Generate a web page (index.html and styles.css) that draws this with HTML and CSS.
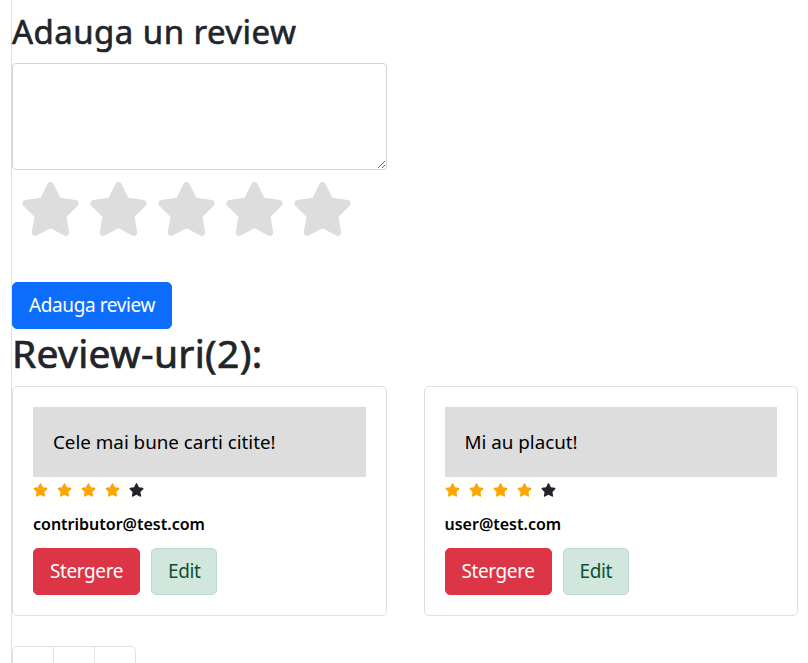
FILE: index.html
```html
<!DOCTYPE html>
<html lang="ro">
<head>
<meta charset="utf-8">
<title>Review-uri</title>
<link rel="stylesheet" href="styles.css">
</head>
<body>
<div class="page">
  <h2 class="title">Adauga un review</h2>
  <textarea class="review-input"></textarea>
  <div class="rating">
    <svg class="big-star" viewBox="0 0 576 512"><path d="M259.3 17.8L194 150.2 47.9 171.5c-26.2 3.8-36.7 36.1-17.7 54.6l105.7 103-25 145.5c-4.5 26.3 23.2 46 46.4 33.7L288 439.6l130.7 68.7c23.2 12.2 50.9-7.4 46.4-33.7l-25-145.5 105.7-103c19-18.5 8.5-50.8-17.7-54.6L382 150.2 316.7 17.8c-11.7-23.6-45.6-23.9-57.4 0z"/></svg>
    <svg class="big-star" viewBox="0 0 576 512"><path d="M259.3 17.8L194 150.2 47.9 171.5c-26.2 3.8-36.7 36.1-17.7 54.6l105.7 103-25 145.5c-4.5 26.3 23.2 46 46.4 33.7L288 439.6l130.7 68.7c23.2 12.2 50.9-7.4 46.4-33.7l-25-145.5 105.7-103c19-18.5 8.5-50.8-17.7-54.6L382 150.2 316.7 17.8c-11.7-23.6-45.6-23.9-57.4 0z"/></svg>
    <svg class="big-star" viewBox="0 0 576 512"><path d="M259.3 17.8L194 150.2 47.9 171.5c-26.2 3.8-36.7 36.1-17.7 54.6l105.7 103-25 145.5c-4.5 26.3 23.2 46 46.4 33.7L288 439.6l130.7 68.7c23.2 12.2 50.9-7.4 46.4-33.7l-25-145.5 105.7-103c19-18.5 8.5-50.8-17.7-54.6L382 150.2 316.7 17.8c-11.7-23.6-45.6-23.9-57.4 0z"/></svg>
    <svg class="big-star" viewBox="0 0 576 512"><path d="M259.3 17.8L194 150.2 47.9 171.5c-26.2 3.8-36.7 36.1-17.7 54.6l105.7 103-25 145.5c-4.5 26.3 23.2 46 46.4 33.7L288 439.6l130.7 68.7c23.2 12.2 50.9-7.4 46.4-33.7l-25-145.5 105.7-103c19-18.5 8.5-50.8-17.7-54.6L382 150.2 316.7 17.8c-11.7-23.6-45.6-23.9-57.4 0z"/></svg>
    <svg class="big-star" viewBox="0 0 576 512"><path d="M259.3 17.8L194 150.2 47.9 171.5c-26.2 3.8-36.7 36.1-17.7 54.6l105.7 103-25 145.5c-4.5 26.3 23.2 46 46.4 33.7L288 439.6l130.7 68.7c23.2 12.2 50.9-7.4 46.4-33.7l-25-145.5 105.7-103c19-18.5 8.5-50.8-17.7-54.6L382 150.2 316.7 17.8c-11.7-23.6-45.6-23.9-57.4 0z"/></svg>
  </div>
  <button class="btn btn-primary">Adauga review</button>
  <h1 class="reviews-title">Review-uri(2):</h1>
  <div class="cards">
    <div class="card">
      <div class="card-text">Cele mai bune carti citite!</div>
      <div class="stars">
        <svg class="star on" viewBox="0 0 576 512"><path d="M259.3 17.8L194 150.2 47.9 171.5c-26.2 3.8-36.7 36.1-17.7 54.6l105.7 103-25 145.5c-4.5 26.3 23.2 46 46.4 33.7L288 439.6l130.7 68.7c23.2 12.2 50.9-7.4 46.4-33.7l-25-145.5 105.7-103c19-18.5 8.5-50.8-17.7-54.6L382 150.2 316.7 17.8c-11.7-23.6-45.6-23.9-57.4 0z"/></svg>
        <svg class="star on" viewBox="0 0 576 512"><path d="M259.3 17.8L194 150.2 47.9 171.5c-26.2 3.8-36.7 36.1-17.7 54.6l105.7 103-25 145.5c-4.5 26.3 23.2 46 46.4 33.7L288 439.6l130.7 68.7c23.2 12.2 50.9-7.4 46.4-33.7l-25-145.5 105.7-103c19-18.5 8.5-50.8-17.7-54.6L382 150.2 316.7 17.8c-11.7-23.6-45.6-23.9-57.4 0z"/></svg>
        <svg class="star on" viewBox="0 0 576 512"><path d="M259.3 17.8L194 150.2 47.9 171.5c-26.2 3.8-36.7 36.1-17.7 54.6l105.7 103-25 145.5c-4.5 26.3 23.2 46 46.4 33.7L288 439.6l130.7 68.7c23.2 12.2 50.9-7.4 46.4-33.7l-25-145.5 105.7-103c19-18.5 8.5-50.8-17.7-54.6L382 150.2 316.7 17.8c-11.7-23.6-45.6-23.9-57.4 0z"/></svg>
        <svg class="star on" viewBox="0 0 576 512"><path d="M259.3 17.8L194 150.2 47.9 171.5c-26.2 3.8-36.7 36.1-17.7 54.6l105.7 103-25 145.5c-4.5 26.3 23.2 46 46.4 33.7L288 439.6l130.7 68.7c23.2 12.2 50.9-7.4 46.4-33.7l-25-145.5 105.7-103c19-18.5 8.5-50.8-17.7-54.6L382 150.2 316.7 17.8c-11.7-23.6-45.6-23.9-57.4 0z"/></svg>
        <svg class="star" viewBox="0 0 576 512"><path d="M259.3 17.8L194 150.2 47.9 171.5c-26.2 3.8-36.7 36.1-17.7 54.6l105.7 103-25 145.5c-4.5 26.3 23.2 46 46.4 33.7L288 439.6l130.7 68.7c23.2 12.2 50.9-7.4 46.4-33.7l-25-145.5 105.7-103c19-18.5 8.5-50.8-17.7-54.6L382 150.2 316.7 17.8c-11.7-23.6-45.6-23.9-57.4 0z"/></svg>
      </div>
      <div class="author">contributor@test.com</div>
      <div class="actions">
        <button class="btn btn-danger">Stergere</button>
        <button class="btn btn-edit">Edit</button>
      </div>
    </div>
    <div class="card">
      <div class="card-text">Mi au placut!</div>
      <div class="stars">
        <svg class="star on" viewBox="0 0 576 512"><path d="M259.3 17.8L194 150.2 47.9 171.5c-26.2 3.8-36.7 36.1-17.7 54.6l105.7 103-25 145.5c-4.5 26.3 23.2 46 46.4 33.7L288 439.6l130.7 68.7c23.2 12.2 50.9-7.4 46.4-33.7l-25-145.5 105.7-103c19-18.5 8.5-50.8-17.7-54.6L382 150.2 316.7 17.8c-11.7-23.6-45.6-23.9-57.4 0z"/></svg>
        <svg class="star on" viewBox="0 0 576 512"><path d="M259.3 17.8L194 150.2 47.9 171.5c-26.2 3.8-36.7 36.1-17.7 54.6l105.7 103-25 145.5c-4.5 26.3 23.2 46 46.4 33.7L288 439.6l130.7 68.7c23.2 12.2 50.9-7.4 46.4-33.7l-25-145.5 105.7-103c19-18.5 8.5-50.8-17.7-54.6L382 150.2 316.7 17.8c-11.7-23.6-45.6-23.9-57.4 0z"/></svg>
        <svg class="star on" viewBox="0 0 576 512"><path d="M259.3 17.8L194 150.2 47.9 171.5c-26.2 3.8-36.7 36.1-17.7 54.6l105.7 103-25 145.5c-4.5 26.3 23.2 46 46.4 33.7L288 439.6l130.7 68.7c23.2 12.2 50.9-7.4 46.4-33.7l-25-145.5 105.7-103c19-18.5 8.5-50.8-17.7-54.6L382 150.2 316.7 17.8c-11.7-23.6-45.6-23.9-57.4 0z"/></svg>
        <svg class="star on" viewBox="0 0 576 512"><path d="M259.3 17.8L194 150.2 47.9 171.5c-26.2 3.8-36.7 36.1-17.7 54.6l105.7 103-25 145.5c-4.5 26.3 23.2 46 46.4 33.7L288 439.6l130.7 68.7c23.2 12.2 50.9-7.4 46.4-33.7l-25-145.5 105.7-103c19-18.5 8.5-50.8-17.7-54.6L382 150.2 316.7 17.8c-11.7-23.6-45.6-23.9-57.4 0z"/></svg>
        <svg class="star" viewBox="0 0 576 512"><path d="M259.3 17.8L194 150.2 47.9 171.5c-26.2 3.8-36.7 36.1-17.7 54.6l105.7 103-25 145.5c-4.5 26.3 23.2 46 46.4 33.7L288 439.6l130.7 68.7c23.2 12.2 50.9-7.4 46.4-33.7l-25-145.5 105.7-103c19-18.5 8.5-50.8-17.7-54.6L382 150.2 316.7 17.8c-11.7-23.6-45.6-23.9-57.4 0z"/></svg>
      </div>
      <div class="author">user@test.com</div>
      <div class="actions">
        <button class="btn btn-danger">Stergere</button>
        <button class="btn btn-edit">Edit</button>
      </div>
    </div>
  </div>
  <ul class="pagination">
    <li class="page-item"></li>
    <li class="page-item"></li>
    <li class="page-item"></li>
  </ul>
</div>
</body>
</html>
```

FILE: styles.css
```css
html, body {
  margin: 0;
  padding: 0;
  background: #fff;
}

body {
  font-family: "Noto Sans", "Open Sans", sans-serif;
  color: #212529;
  overflow: hidden;
}

.page {
  margin-left: 11px;
  border-left: 1px solid #dee2e6;
  min-height: 663px;
  padding-right: 10px;
  padding-top: 12px;
}

.title {
  font-size: 33px;
  font-weight: 400;
  line-height: 1.2;
  margin: 0 0 11px;
  letter-spacing: 0.45px;
  -webkit-text-stroke: 0.6px #212529;
}

.review-input {
  display: block;
  box-sizing: border-box;
  width: 375px;
  height: 107px;
  margin: 0;
  border: 1px solid #ced4da;
  border-radius: 4px;
  resize: vertical;
  font-family: inherit;
}

.rating {
  display: flex;
  gap: 7px;
  padding-left: 8px;
  margin-top: 12px;
  height: 100px;
}

.big-star {
  width: 61px;
  height: 54px;
  fill: #dddddd;
}

.btn {
  font-family: inherit;
  font-size: 19px;
  line-height: 29px;
  letter-spacing: -0.4px;
  padding: 8px 16px;
  border: 1px solid transparent;
  border-radius: 5px;
  cursor: pointer;
}

.btn-primary {
  display: block;
  background: #0d6efd;
  border-color: #0d6efd;
  color: #fff;
}

.btn-danger {
  background: #dc3545;
  border-color: #dc3545;
  color: #fff;
}

.btn-edit {
  background: #d1e7dd;
  border-color: #badbcc;
  color: #0f5132;
}

.reviews-title {
  font-size: 39px;
  font-weight: 400;
  line-height: 1.2;
  margin: 1px 0 10px;
  letter-spacing: 0.3px;
  -webkit-text-stroke: 0.7px #212529;
}

.cards {
  display: flex;
  gap: 37px;
}

.card {
  box-sizing: border-box;
  width: 375px;
  border: 1px solid #dfdfdf;
  border-radius: 5px;
  padding: 20px;
}

.card-text {
  display: flex;
  align-items: center;
  height: 70px;
  padding: 0 20px;
  background: #dddddd;
  font-size: 18.8px;
  color: #000;
}

.stars {
  display: flex;
  gap: 9px;
  margin-top: 6px;
  height: 20px;
}

.star {
  width: 15px;
  height: 14px;
  fill: #212529;
}

.star.on {
  fill: #ffa500;
}

.author {
  font-size: 16px;
  font-weight: 600;
  line-height: 24px;
  margin-top: 9px;
  color: #000;
}

.actions {
  display: flex;
  gap: 11px;
  margin-top: 12px;
}

.pagination {
  display: flex;
  list-style: none;
  margin: 30px 0 0;
  padding: 0;
}

.page-item {
  width: 40px;
  height: 38px;
  border: 1px solid #dee2e6;
  margin-left: -1px;
}

.page-item:first-child {
  margin-left: 0;
  border-top-left-radius: 5px;
  border-bottom-left-radius: 5px;
}

.page-item:last-child {
  border-top-right-radius: 5px;
  border-bottom-right-radius: 5px;
}
```
